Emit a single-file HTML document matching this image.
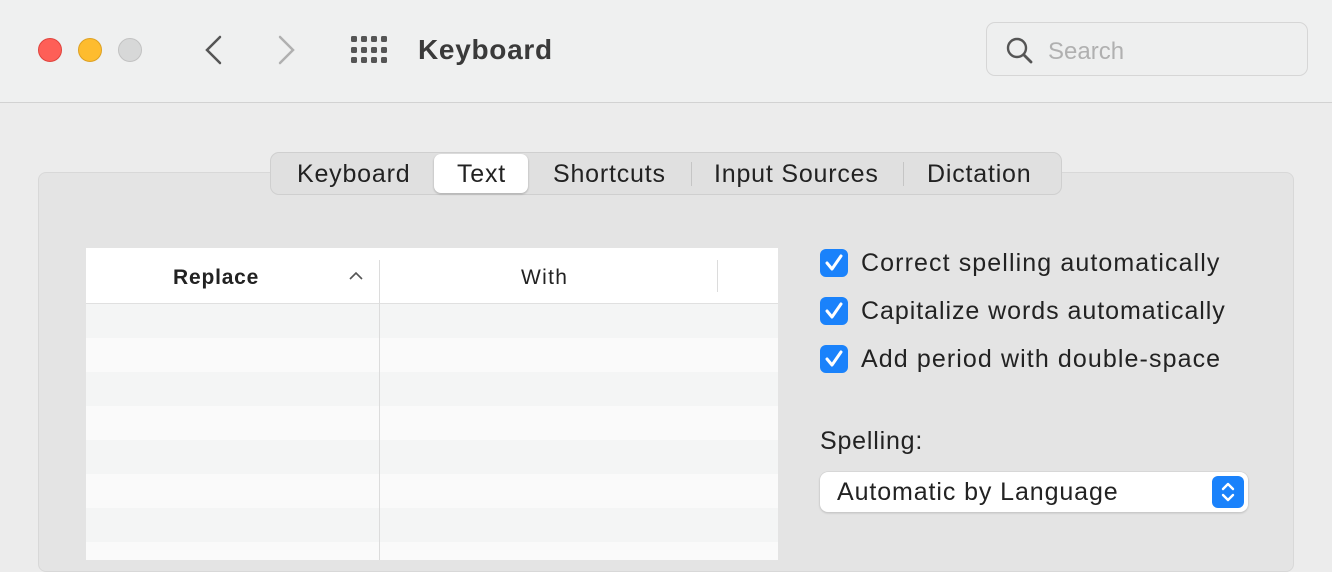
<html><head><style>
body{margin:0;width:1332px;height:560px;overflow:hidden;background:#ececec;font-family:"Liberation Sans",sans-serif;position:relative}
.a{position:absolute}
</style></head><body>
<div class="a" style="left:0;top:0;width:1332px;height:102px;background:#eff0f0;border-bottom:1px solid #d2d2d2"></div>
<div class="a" style="left:38px;top:38px;width:24px;height:24px;border-radius:50%;background:#fe5f57;box-sizing:border-box;border:1px solid #e0443e"></div>
<div class="a" style="left:78px;top:38px;width:24px;height:24px;border-radius:50%;background:#febc2e;box-sizing:border-box;border:1px solid #dea123"></div>
<div class="a" style="left:118px;top:38px;width:24px;height:24px;border-radius:50%;background:#d7d8d8;box-sizing:border-box;border:1px solid #c2c2c2"></div>
<svg class="a" style="left:200px;top:34px" width="100" height="32"><path d="M20 3 L7 16 L20 29" stroke="#555" stroke-width="2.5" fill="none" stroke-linecap="round"/><path d="M80 3 L93 16 L80 29" stroke="#b0b0b0" stroke-width="2.5" fill="none" stroke-linecap="round"/></svg>
<svg class="a" style="left:351px;top:36px" width="38" height="28" fill="#555"><rect x="0" y="0" width="6" height="6" rx="1.5"/><rect x="10" y="0" width="6" height="6" rx="1.5"/><rect x="20" y="0" width="6" height="6" rx="1.5"/><rect x="30" y="0" width="6" height="6" rx="1.5"/><rect x="0" y="11" width="6" height="6" rx="1.5"/><rect x="10" y="11" width="6" height="6" rx="1.5"/><rect x="20" y="11" width="6" height="6" rx="1.5"/><rect x="30" y="11" width="6" height="6" rx="1.5"/><rect x="0" y="21" width="6" height="6" rx="1.5"/><rect x="10" y="21" width="6" height="6" rx="1.5"/><rect x="20" y="21" width="6" height="6" rx="1.5"/><rect x="30" y="21" width="6" height="6" rx="1.5"/></svg>
<div class="a" style="left:418px;top:34px;font-size:28px;font-weight:bold;color:#3a3a3a;letter-spacing:0.7px">Keyboard</div>
<div class="a" style="left:986px;top:22px;width:322px;height:54px;box-sizing:border-box;border:1px solid #d6d6d6;border-radius:9px;background:#eeefef"></div>
<svg class="a" style="left:1006px;top:37px" width="28" height="28"><circle cx="11" cy="11" r="9" stroke="#555" stroke-width="2.4" fill="none"/><path d="M18 18 L25 25" stroke="#555" stroke-width="2.8" stroke-linecap="round"/></svg>
<div class="a" style="left:1048px;top:38px;font-size:24px;color:#b0b0b0">Search</div>
<div class="a" style="left:38px;top:172px;width:1256px;height:400px;box-sizing:border-box;background:#e4e4e4;border:1px solid #d8d8d8;border-radius:8px"></div>
<div class="a" style="left:270px;top:152px;width:792px;height:43px;box-sizing:border-box;background:#e0e0e0;border:1px solid #cfcfcf;border-radius:9px"></div>
<div class="a" style="left:434px;top:154px;width:94px;height:39px;background:#fff;border-radius:7px;box-shadow:0 1px 2px rgba(0,0,0,.25)"></div>
<div class="a" style="left:691px;top:162px;width:1px;height:24px;background:#c5c5c5"></div>
<div class="a" style="left:903px;top:162px;width:1px;height:24px;background:#c5c5c5"></div>
<div class="a" style="top:160px;left:297px;font-size:25px;color:#222;letter-spacing:0.8px">Keyboard</div>
<div class="a" style="top:160px;left:457px;font-size:25px;color:#222;letter-spacing:0.8px">Text</div>
<div class="a" style="top:160px;left:553px;font-size:25px;color:#222;letter-spacing:0.8px">Shortcuts</div>
<div class="a" style="top:160px;left:714px;font-size:25px;color:#222;letter-spacing:0.8px">Input Sources</div>
<div class="a" style="top:160px;left:927px;font-size:25px;color:#222;letter-spacing:0.8px">Dictation</div>
<div class="a" style="left:86px;top:248px;width:692px;height:312px;background:repeating-linear-gradient(#f4f5f5 0 34px,#fafafa 34px 68px);background-position:0 56px"></div>
<div class="a" style="left:86px;top:248px;width:692px;height:55px;background:#fff;border-bottom:1px solid #e0e0e0"></div>
<div class="a" style="left:379px;top:260px;width:1px;height:300px;background:#dcdcdc"></div>
<div class="a" style="left:717px;top:260px;width:1px;height:32px;background:#dcdcdc"></div>
<div class="a" style="left:173px;top:266px;font-size:21px;font-weight:bold;color:#222;letter-spacing:0.8px">Replace</div>
<svg class="a" style="left:349px;top:271px" width="14" height="10"><path d="M1 8 L7 2 L13 8" stroke="#555" stroke-width="1.6" fill="none"/></svg>
<div class="a" style="left:521px;top:266px;font-size:21px;color:#222;letter-spacing:1.3px">With</div>
<svg class="a" style="left:820px;top:248px" width="28" height="130">
<g><rect x="0" y="1" width="28" height="28" rx="6" fill="#1a82fb"/><path d="M7 15 L12 21 L21 8" stroke="#fff" stroke-width="3" fill="none" stroke-linecap="round" stroke-linejoin="round"/></g>
<g transform="translate(0,48)"><rect x="0" y="1" width="28" height="28" rx="6" fill="#1a82fb"/><path d="M7 15 L12 21 L21 8" stroke="#fff" stroke-width="3" fill="none" stroke-linecap="round" stroke-linejoin="round"/></g>
<g transform="translate(0,96)"><rect x="0" y="1" width="28" height="28" rx="6" fill="#1a82fb"/><path d="M7 15 L12 21 L21 8" stroke="#fff" stroke-width="3" fill="none" stroke-linecap="round" stroke-linejoin="round"/></g>
</svg>
<div class="a" style="left:861px;top:249px;font-size:25px;color:#222;letter-spacing:1.1px">Correct spelling automatically</div>
<div class="a" style="left:861px;top:297px;font-size:25px;color:#222;letter-spacing:0.95px">Capitalize words automatically</div>
<div class="a" style="left:861px;top:345px;font-size:25px;color:#222;letter-spacing:1.1px">Add period with double-space</div>
<div class="a" style="left:820px;top:427px;font-size:25px;color:#222;letter-spacing:0.8px">Spelling:</div>
<div class="a" style="left:820px;top:472px;width:428px;height:40px;background:#fff;border-radius:8px;box-shadow:0 0 0 .5px #ccc,0 1px 2px rgba(0,0,0,.2)"></div>
<div class="a" style="left:837px;top:478px;font-size:25px;color:#222;letter-spacing:0.9px">Automatic by Language</div>
<div class="a" style="left:1212px;top:476px;width:32px;height:32px;background:#1a82fb;border-radius:6px"></div>
<svg class="a" style="left:1212px;top:476px" width="32" height="32"><path d="M11 13 L16 8 L21 13 M11 19 L16 24 L21 19" stroke="#fff" stroke-width="2.4" fill="none" stroke-linecap="round" stroke-linejoin="round"/></svg>
</body></html>
